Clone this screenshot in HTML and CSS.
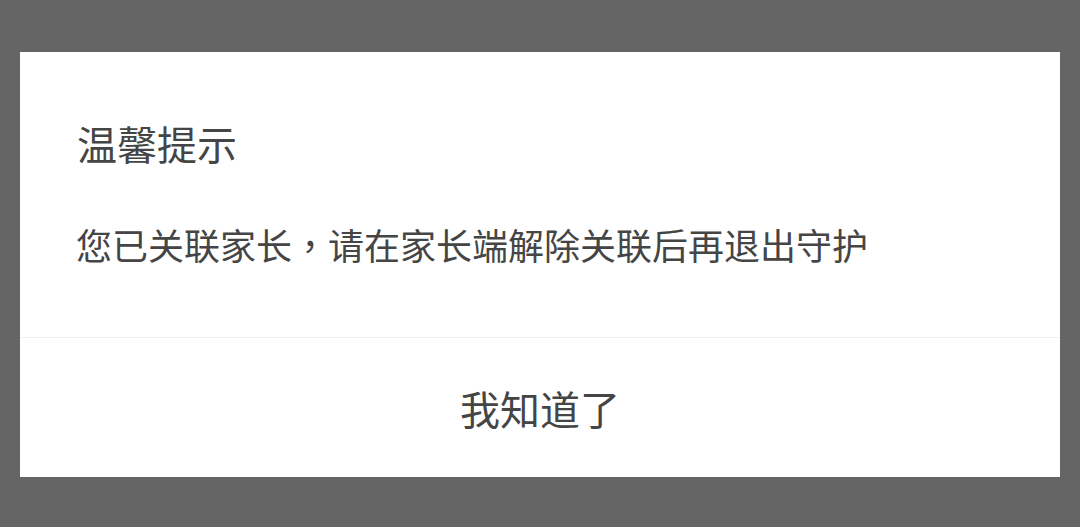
FILE: index.html
```html
<!DOCTYPE html>
<html lang="zh-CN">
<head>
<meta charset="utf-8">
<title>温馨提示</title>
<link rel="stylesheet" href="styles.css">
</head>
<body>
<div class="dialog">
  <div class="content">
    <div class="title">温馨提示</div>
    <div class="message">您已关联家长<span class="punct" lang="zh-TW">，</span>请在家长端解除关联后再退出守护</div>
  </div>
  <div class="footer">
    <div class="button">我知道了</div>
  </div>
</div>
</body>
</html>
```
FILE: styles.css
```css
html, body {
  margin: 0;
  padding: 0;
}
body {
  background: #656565;
  width: 1080px;
  height: 527px;
  overflow: hidden;
  font-family: "Noto Sans CJK SC", "Noto Sans", sans-serif;
  color: #454545;
}
.dialog {
  margin: 52px 20px 0;
  height: 425px;
  background: #ffffff;
  display: flex;
  flex-direction: column;
}
.content {
  padding: 71px 57px 0;
  height: 286px;
  box-sizing: border-box;
  border-bottom: 1px solid #eeeeee;
}
.title {
  font-size: 40px;
  line-height: 40px;
}
.message {
  margin-top: 63px;
  font-size: 36px;
  line-height: 36px;
  margin-left: -1px;
}
.punct {
  font-family: "Noto Sans CJK TC", "Noto Sans CJK SC", sans-serif;
}
.footer {
  flex: 1;
  display: flex;
  align-items: center;
  justify-content: center;
}
.button {
  font-size: 40px;
  line-height: 40px;
}
```
